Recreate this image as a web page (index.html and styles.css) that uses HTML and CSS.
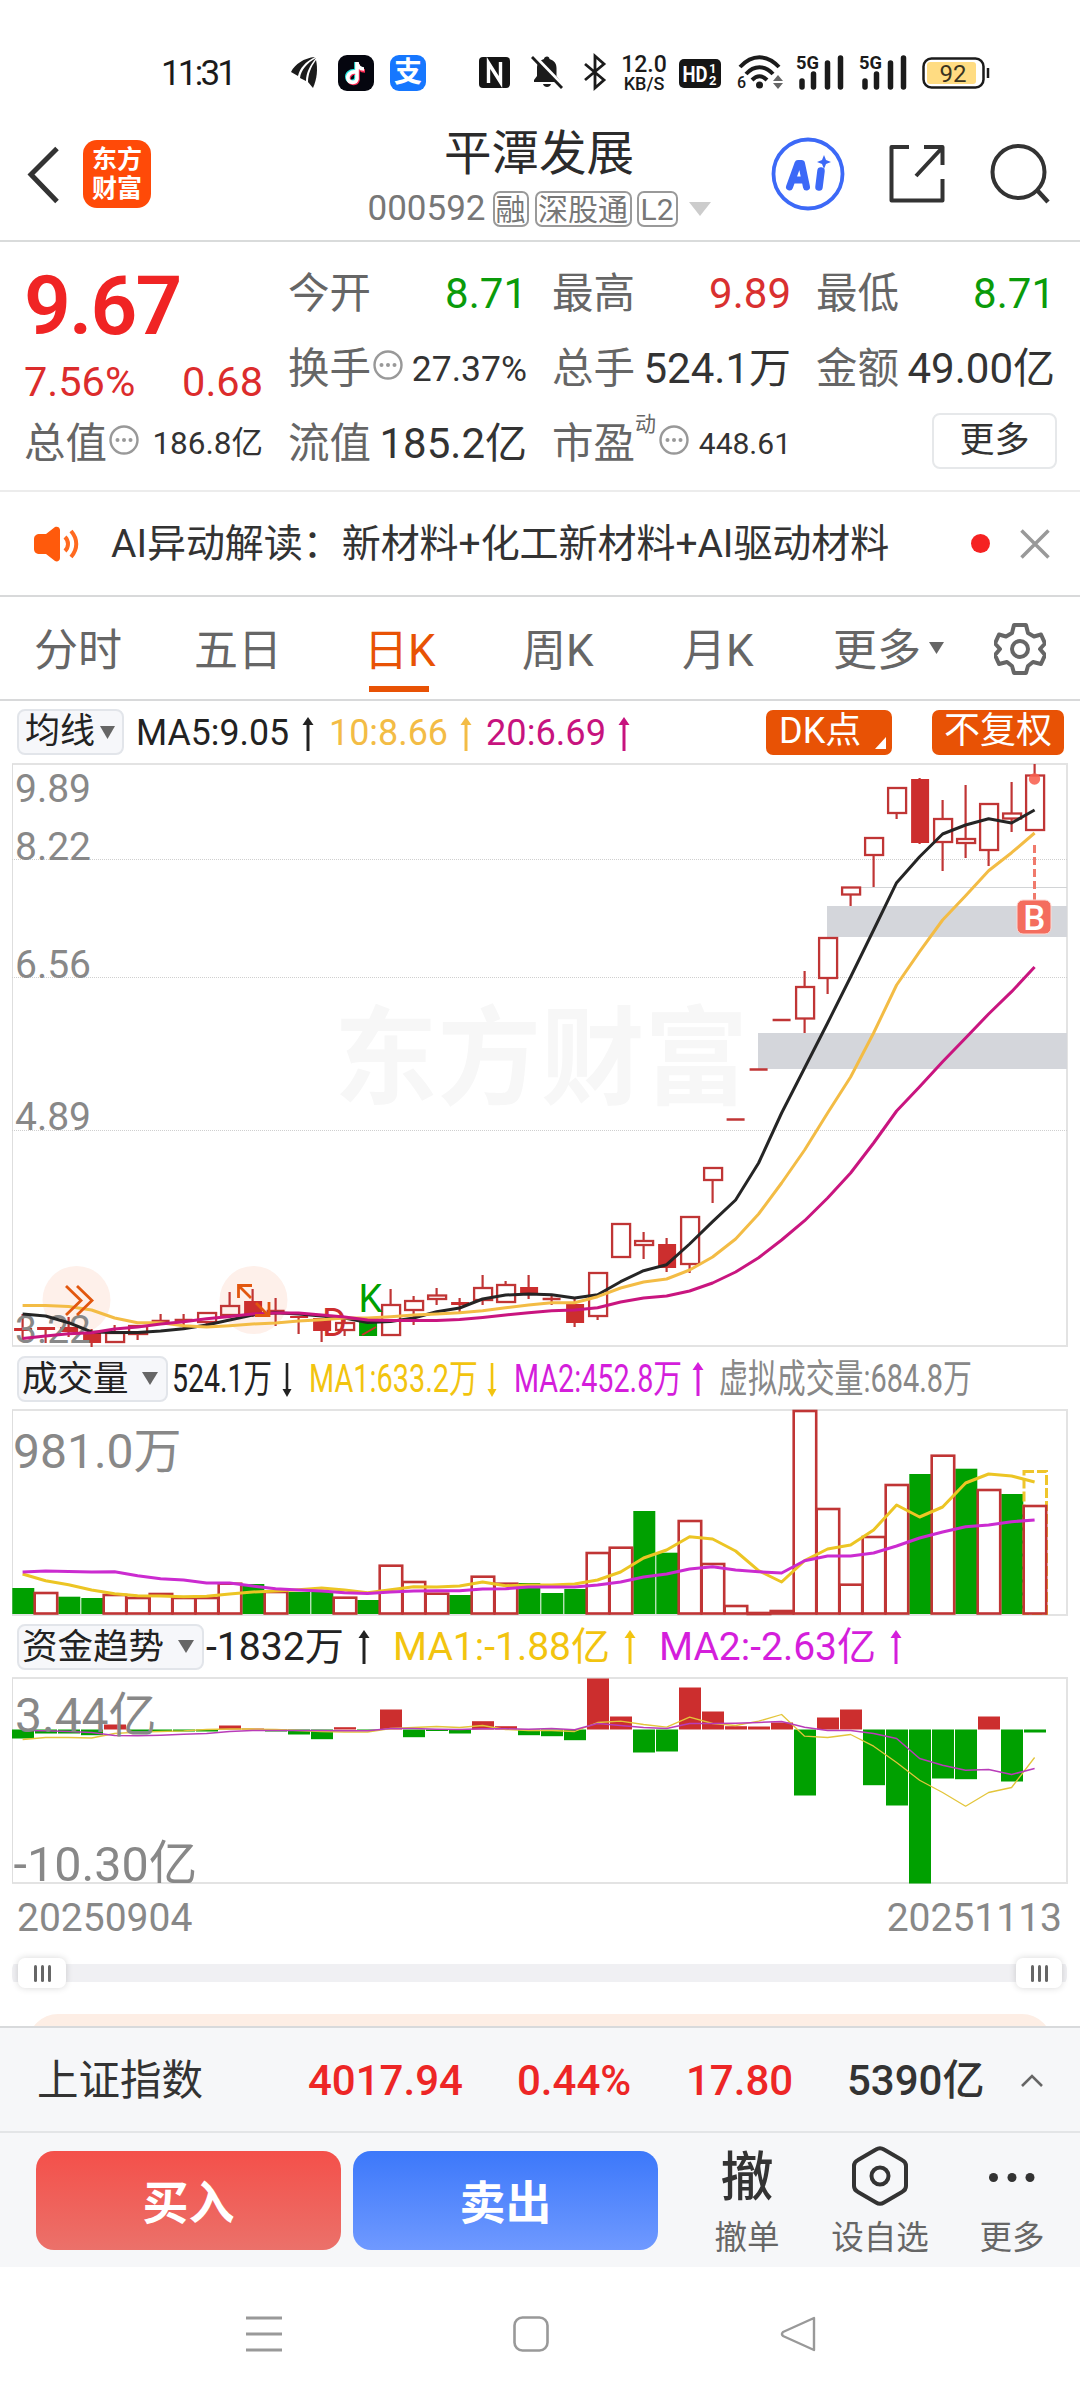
FILE: index.html
```
<!DOCTYPE html>
<html lang="zh-CN">
<head>
<meta charset="utf-8">
<title>平潭发展 000592</title>
<link rel="stylesheet" href="styles.css">
</head>
<body>
<main class="screen">
  <div class="status">
    <span class="clock">11:31</span>
    <svg class="s-bird" width="28" height="34" viewBox="0 0 28 34"><path d="M25 2C14 3 5 9 1 17l7 4C10 13 15 7 25 2z" fill="#1b1b1b"/><path d="M26 3c-9 5-15 12-16 20l6 3c0-8 4-16 10-23z" fill="#1b1b1b"/><path d="M26 5c-5 7-8 14-8 22l5 6c4-9 5-19 3-28z" fill="#1b1b1b"/></svg>
    <svg class="s-tok" width="36" height="36" viewBox="0 0 36 36"><rect width="36" height="36" rx="9" fill="#05060f"/><g fill="none" stroke-width="3.600"><path d="M17 16c-5-1-9 3-8 7s8 5 9 0V7c0 4 3 7 7 7" stroke="#29e6e2"/><path d="M19 18c-5-1-9 3-8 7s8 5 9 0V9c0 4 3 7 7 7" stroke="#fb2c55"/><path d="M18 17c-5-1-9 3-8 7s8 5 9 0V7c0 4 3 7 7 7" stroke="#fff"/></g></svg>
    <span class="s-pay">支</span>
    <svg class="s-nfc" width="31" height="31" viewBox="0 0 31 31"><rect width="31" height="31" rx="4" fill="#151515"/><path d="M9.500 26V6l12 19V5M9.500 8v18M21.500 5v18" fill="none" stroke="#fff" stroke-width="3.400"/></svg>
    <svg class="s-bell" width="34" height="34" viewBox="0 0 34 34"><path d="M17 1.500c1.500 0 2.500 1 2.500 2.500 5 1.500 7 5 7 9v8l3 4v2H4v-2l3-4v-8c0-4 2-7.500 7-9 0-1.500 1.500-2.500 3-2.500z" fill="#1b1b1b"/><path d="M13 29h8c-1 4-7 4-8 0z" fill="#1b1b1b"/><path d="M3.500 .5l30 31" stroke="#fff" stroke-width="4"/><path d="M2 2l30 31" stroke="#1b1b1b" stroke-width="2.800"/></svg>
    <svg class="s-bt" width="24" height="34" viewBox="0 0 24 34"><path d="M2 9l19 16-9 8V1l9 8L2 25" fill="none" stroke="#1b1b1b" stroke-width="2.800"/></svg>
    <span class="s-speed"><b>12.0</b><i>KB/S</i></span>
    <svg class="s-hd" width="42" height="29" viewBox="0 0 42 29"><rect width="42" height="29" rx="5" fill="#161616"/><text x="3.500" y="22.500" font-size="22" font-weight="700" fill="#fff" textLength="25" lengthAdjust="spacingAndGlyphs">HD</text><text x="30" y="13.500" font-size="13" font-weight="700" fill="#fff">1</text><text x="30" y="25.500" font-size="13" font-weight="700" fill="#fff">2</text></svg>
    <svg class="s-wifi" width="50" height="34" viewBox="0 0 50 34"><g fill="none" stroke="#1b1b1b" stroke-width="4"><path d="M3 12c12-13 27-13 39 0"/><path d="M9 19c8-9 19-9 27 0"/><path d="M15 25c5-5 10-5 15 0"/></g><circle cx="22.500" cy="30" r="3.500" fill="#1b1b1b"/><text x="0" y="33" font-size="16" font-weight="500" fill="#1b1b1b">6</text><path d="M36 26l5-6 5 6zM36 28l5 6 5-6z" fill="#666"/></svg>
    <svg class="s-sig" width="48" height="34" viewBox="0 0 48 34"><text x="0" y="13.500" font-size="18" font-weight="700" fill="#1b1b1b" textLength="23" lengthAdjust="spacingAndGlyphs">5G</text><path d="M5.500 27v6M17 20v13M31 9v24M44 4v29" stroke="#1b1b1b" stroke-width="5.500" stroke-linecap="round" transform="translate(.5 -1)"/></svg>
    <svg class="s-sig2" width="48" height="34" viewBox="0 0 48 34"><text x="0" y="13.500" font-size="18" font-weight="700" fill="#1b1b1b" textLength="23" lengthAdjust="spacingAndGlyphs">5G</text><path d="M5.500 27v6M17 20v13M31 9v24M44 4v29" stroke="#1b1b1b" stroke-width="5.500" stroke-linecap="round" transform="translate(.5 -1)"/></svg>
    <svg class="s-bat" width="68" height="32" viewBox="0 0 68 32"><rect x="1.500" y="1.500" width="60" height="29" rx="8" fill="#fff" stroke="#1b1b1b" stroke-width="2.500"/><rect x="5" y="5" width="49" height="22" rx="3" fill="#ffdc82"/><path d="M66 11v10" stroke="#1b1b1b" stroke-width="2.500"/><text x="31" y="24.500" font-size="24" fill="#3a3320" text-anchor="middle">92</text></svg>
  </div>

  <header class="header">
    <div class="head-left">
      <svg class="back" width="34" height="60" viewBox="0 0 34 60"><path d="M31 3.500L5 29.500l26 27" fill="none" stroke="#333" stroke-width="5"/></svg>
      <div class="logo"><span>东方</span><span>财富</span></div>
    </div>
    <div class="head-mid">
      <h1 class="name">平潭发展</h1>
      <div class="codes"><span class="code">000592</span><span class="tag t1">融</span><span class="tag t2">深股通</span><span class="tag t3">L2</span><svg class="codes-tri" width="22" height="14"><path d="M0 0h22L11 14z" fill="#ccc"/></svg></div>
    </div>
    <div class="head-right">
      <svg width="74" height="74" viewBox="0 0 74 74"><circle cx="37" cy="37" r="34.500" fill="none" stroke="#3c69f7" stroke-width="3.800"/><path d="M18.500 50L27 26.500h3.500L35.500 50M23 43h10" fill="none" stroke="#3c69f7" stroke-width="7" stroke-linejoin="round" stroke-linecap="round"/><path d="M50 34l-2 16" stroke="#3c69f7" stroke-width="7.500" stroke-linecap="round"/><path d="M53 18l2 5 5 2-5 2-2 5-2-5-5-2 5-2z" fill="#3c69f7"/></svg>
      <svg class="share" width="60" height="60" viewBox="0 0 60 60"><path d="M22 3H4.500v53.500h51V35M37 3h18.500v18M55 4L29 32" fill="none" stroke="#333" stroke-width="4" stroke-linejoin="round"/></svg>
      <svg class="find" width="61" height="62" viewBox="0 0 61 62"><circle cx="28.500" cy="29" r="26" fill="none" stroke="#333" stroke-width="4"/><path d="M47 47l11 12" stroke="#333" stroke-width="4.500"/></svg>
    </div>
  </header>

  <section class="quote">
    <div class="price">
      <div class="last">9.67</div>
      <div class="chg"><span>7.56%</span><span>0.68</span></div>
    </div>
    <div class="kv"><span class="k">今开</span><span class="v dn">8.71</span></div>
    <div class="kv"><span class="k">最高</span><span class="v up">9.89</span></div>
    <div class="kv"><span class="k">最低</span><span class="v dn">8.71</span></div>
    <div class="kv"><span class="k">换手</span><svg class="dots" width="30" height="30"><use href="#more-dot"/></svg><span class="v v35">27.37%</span></div>
    <div class="kv"><span class="k">总手</span><span class="v">524.1万</span></div>
    <div class="kv"><span class="k">金额</span><span class="v">49.00亿</span></div>
    <div class="kv"><span class="k">总值</span><svg class="dots" width="30" height="30"><use href="#more-dot"/></svg><span class="v v31">186.8亿</span></div>
    <div class="kv"><span class="k">流值</span><span class="v">185.2亿</span></div>
    <div class="kv"><span class="k">市盈</span><sup class="sup">动</sup><svg class="dots" width="30" height="30"><use href="#more-dot"/></svg><span class="v v30">448.61</span></div>
    <div class="kv end"><span class="more-btn">更多</span></div>
  </section>

  <section class="news">
    <svg width="46" height="38" viewBox="0 0 46 38"><path d="M7 9h6L22 2c2-1 5 0 5 3v28c0 3-3 4-5 3l-9-7H7c-4 0-6-2-6-5V14c0-3 2-5 6-5z" fill="#ff5a0c"/><path d="M32 12c4 4 4 10 0 14M38 6c7 8 7 18 0 26" fill="none" stroke="#ff6a20" stroke-width="4"/></svg>
    <span class="news-text">AI异动解读：新材料+化工新材料+AI驱动材料</span>
    <i class="news-dot"></i>
    <svg width="30" height="30" viewBox="0 0 30 30"><path d="M1.500 1.500l27 27M28.500 1.500l-27 27" stroke="#999" stroke-width="3.500"/></svg>
  </section>

  <nav class="tabs">
    <span>分时</span><span>五日</span><span class="on">日K</span><span>周K</span><span>月K</span>
    <span>更多<svg class="tab-tri" width="15" height="12"><path d="M0 0h15L7.500 12z" fill="#666"/></svg></span>
    <svg class="gear" width="52" height="54" viewBox="0 0 52 54"><path d="M20 3h12l2 8 6 3.500 7-2 4 9-5 5.500 5 6-4 9-8-2-5 4-2 7H20l-2-7-5-4-8 2-4-9 5-6-5-5.500 4-9 7 2 6-3.500z" fill="none" stroke="#666" stroke-width="4" stroke-linejoin="round"/><circle cx="26" cy="27" r="8" fill="none" stroke="#666" stroke-width="4"/></svg>
  </nav>

  <div class="legend ma">
    <span class="pick p1">均线<svg width="15" height="13"><path d="M0 0h15L7.500 13z" fill="#666"/></svg></span>
    <svg class="vals" width="500" height="60" viewBox="136 701 500 60">
      <g font-size="36">
        <text x="136" y="745" fill="#222" textLength="153" lengthAdjust="spacingAndGlyphs">MA5:9.05</text>
        <text x="329" y="745" fill="#f3bc45" textLength="119" lengthAdjust="spacingAndGlyphs">10:8.66</text>
        <text x="486" y="745" fill="#c7137e" textLength="120" lengthAdjust="spacingAndGlyphs">20:6.69</text>
      </g>
      <use href="#arr" x="308" y="717" color="#222"/><use href="#arr" x="466" y="717" color="#f3bc45"/><use href="#arr" x="624" y="717" color="#c7137e"/>
    </svg>
    <span class="chip dk">DK点<svg class="corner" width="11" height="12"><path d="M11 0v12H0z" fill="#fff"/></svg></span>
    <span class="chip fq">不复权</span>
  </div>
  <svg id="kline" class="chart" width="1080" height="585" viewBox="0 763 1080 585"></svg>

  <div class="legend">
    <span class="pick p2">成交量<svg width="16" height="13"><path d="M0 0h16L8 13z" fill="#666"/></svg></span>
    <svg class="vals" width="810" height="61" viewBox="170 1348 810 61">
      <g font-size="39">
        <text x="172" y="1392" fill="#222" textLength="100" lengthAdjust="spacingAndGlyphs">524.1万</text>
        <text x="309" y="1392" fill="#f2c40f" textLength="169" lengthAdjust="spacingAndGlyphs">MA1:633.2万</text>
        <text x="514" y="1392" fill="#d41edb" textLength="168" lengthAdjust="spacingAndGlyphs">MA2:452.8万</text>
        <text x="719" y="1392" fill="#888" textLength="253" lengthAdjust="spacingAndGlyphs">虚拟成交量:684.8万</text>
      </g>
      <use href="#arrd" x="287" y="1363" color="#222"/><use href="#arrd" x="492" y="1363" color="#f2c40f"/><use href="#arr" x="698" y="1362" color="#d41edb"/>
    </svg>
  </div>
  <svg id="volume" class="chart" width="1080" height="207" viewBox="0 1409 1080 207"></svg>

  <div class="legend">
    <span class="pick p3">资金趋势<svg width="16" height="13"><path d="M0 0h16L8 13z" fill="#666"/></svg></span>
    <svg class="vals" width="710" height="62" viewBox="205 1616 710 62">
      <g font-size="38.500">
        <text x="205" y="1660" fill="#222" textLength="138" lengthAdjust="spacingAndGlyphs">-1832万</text>
        <text x="392" y="1660" fill="#f2c40f" textLength="217" lengthAdjust="spacingAndGlyphs">MA1:-1.88亿</text>
        <text x="658" y="1660" fill="#d41edb" textLength="217" lengthAdjust="spacingAndGlyphs">MA2:-2.63亿</text>
      </g>
      <use href="#arr" x="363" y="1630" color="#222"/><use href="#arr" x="629" y="1630" color="#f2c40f"/><use href="#arr" x="895" y="1630" color="#d41edb"/>
    </svg>
  </div>
  <svg id="flow" class="chart" width="1080" height="208" viewBox="0 1678 1080 208"></svg>

  <div class="dates"><span>20250904</span><span>20251113</span></div>
  <div class="slider"><i class="knob"><b></b><b></b><b></b></i><i class="knob k2"><b></b><b></b><b></b></i></div>
  <div class="peek"><div class="peek-card"></div></div>

  <section class="index">
    <span class="ix-name">上证指数</span><b class="ix up">4017.94</b><b class="ix up">0.44%</b><b class="ix up">17.80</b><b class="ix">5390亿</b>
    <svg width="24" height="14" viewBox="0 0 24 14"><path d="M2 12L12 2l10 10" fill="none" stroke="#666" stroke-width="2.600"/></svg>
  </section>

  <section class="actions">
    <span class="btn buy">买入</span>
    <span class="btn sell">卖出</span>
    <div class="act a1"><div class="act-ic"><b>撤</b></div><span>撤单</span></div>
    <div class="act a2"><div class="act-ic"><svg width="56" height="60" viewBox="0 0 56 60"><path d="M24 3.500q4-2.500 8 0l18 10.500q4 2 4 6v20q0 4-4 6L32 56.500q-4 2.500-8 0L6 46q-4-2-4-6V20q0-4 4-6z" fill="none" stroke="#333" stroke-width="4"/><circle cx="28" cy="30" r="8.500" fill="none" stroke="#333" stroke-width="4"/></svg></div><span>设自选</span></div>
    <div class="act a3"><div class="act-ic"><svg width="48" height="12"><circle cx="5.500" cy="7.500" r="4.500" fill="#333"/><circle cx="24" cy="7.500" r="4.500" fill="#333"/><circle cx="42" cy="7.500" r="4.500" fill="#333"/></svg></div><span>更多</span></div>
  </section>

  <footer class="sysnav">
    <svg width="36" height="38" viewBox="0 0 36 38"><path d="M0 3h36M0 19h36M0 35h36" stroke="#999" stroke-width="3"/></svg>
    <svg width="36" height="38" viewBox="0 0 36 38"><rect x="1.500" y="2.500" width="33" height="33" rx="8" fill="none" stroke="#999" stroke-width="2.600"/></svg>
    <svg width="36" height="38" viewBox="0 0 36 38"><path d="M34 3v32L3 21q-2-2 0-4z" fill="none" stroke="#999" stroke-width="2.400" stroke-linejoin="round"/></svg>
  </footer>
</main>
<svg class="defs" width="0" height="0">
  <defs>
    <g id="more-dot"><circle cx="15" cy="15" r="13.500" fill="none" stroke="#999" stroke-width="2.400"/><circle cx="8.500" cy="15" r="2" fill="#999"/><circle cx="15" cy="15" r="2" fill="#999"/><circle cx="21.500" cy="15" r="2" fill="#999"/></g>
    <g id="arr"><path d="M-5.500 8L0 0l5.500 8z" fill="currentColor"/><path d="M0 4v30" stroke="currentColor" stroke-width="3"/></g>
    <g id="arrd"><path d="M-4.500 26L0 34l4.500-8z" fill="currentColor"/><path d="M0 0v30" stroke="currentColor" stroke-width="2.600"/></g>
  </defs>
</svg>
<script src="chart.js"></script>
</body>
</html>
```
FILE: styles.css
```
* { box-sizing: border-box; }
body { margin: 0; background: #fff; font-family: Roboto, "Noto Sans CJK SC", sans-serif; color: #333; }
.screen { width: 1080px; height: 2400px; overflow: hidden; display: flex; flex-direction: column; background: #fff; }
.screen > * { flex: none; }
svg { display: block; flex: none; }
svg text { font-family: Roboto, "Noto Sans CJK SC", sans-serif; }
i, b { font-style: normal; }
.defs { position: absolute; }
.up { color: #ed2626; }
.dn { color: #0a9b0a; }

/* status bar */
.status { height: 120px; padding: 55px 0 0 161px; display: flex; align-items: flex-start; white-space: nowrap; }
.status svg { overflow: visible; }
.clock { width: 73px; font-size: 35px; line-height: 38px; letter-spacing: -2.8px; color: #1b1b1b; }
.s-bird { margin-left: 56px; }
.s-tok { margin-left: 20px; }
.s-pay { margin-left: 16px; width: 36px; height: 36px; border-radius: 9px; background: #1677ff; color: #fff; font-size: 28px; font-weight: 700; line-height: 35px; text-align: center; }
.s-nfc { margin: 2px 0 0 53px; }
.s-bell { margin-left: 20px; }
.s-bt { margin-left: 19px; }
.s-speed { margin-left: 13px; width: 48px; display: flex; flex-direction: column; align-items: center; color: #1b1b1b; }
.s-speed b { font-size: 23px; font-weight: 500; line-height: 20px; }
.s-speed i { font-size: 18px; font-weight: 500; line-height: 18px; }
.s-hd { margin: 4px 0 0 11px; }
.s-wifi { margin-left: 16px; }
.s-sig { margin-left: 9px; }
.s-sig2 { margin-left: 15px; }
.s-bat { margin: 2px 0 0 15px; }

/* header */
.header { height: 122px; border-bottom: 2px solid #d9dbdb; display: grid; grid-template-columns: 312px 456px 312px; }
.head-left { display: flex; padding: 20px 0 0 26px; }
.back { margin-top: 5px; }
.logo { margin-left: 23px; width: 68px; height: 68px; border-radius: 14px; background: #ff4a08; color: #fff; display: flex; flex-direction: column; align-items: center; padding-top: 5px; font-size: 25px; font-weight: 700; line-height: 29px; }
.head-mid { display: flex; flex-direction: column; align-items: center; margin-left: -2px; }
.name { margin: 2px 0 0; font-size: 47.500px; font-weight: 400; line-height: 64px; color: #2b2b2b; }
.codes { margin-top: 5px; height: 36px; display: flex; align-items: center; color: #777; }
.code { font-size: 35px; line-height: 36px; }
.tag { height: 36px; border: 2px solid #999; border-radius: 7px; font-size: 30px; line-height: 33px; text-align: center; }
.t1 { width: 36px; margin-left: 7px; }
.t2 { width: 97px; margin-left: 6px; }
.t3 { width: 41px; margin-left: 5px; }
.codes-tri { margin-left: 11px; }
.head-right { display: flex; align-items: flex-start; padding: 17px 0 0 3px; }
.share { margin: 7px 0 0 42px; }
.find { margin: 6px 0 0 43px; }

/* quote */
.quote { height: 250px; padding: 14px 25px 0 24px; border-bottom: 2px solid #ececec; display: grid; grid-template-columns: repeat(4, 239px); grid-template-rows: repeat(3, 75px); column-gap: 25px; }
.price { grid-row: span 2; }
.last { font-size: 82px; font-weight: 600; line-height: 100px; letter-spacing: -1.8px; color: #f02424; }
.chg { display: flex; justify-content: space-between; font-size: 41.500px; line-height: 51px; color: #dc2c2c; }
.kv { display: flex; line-height: 76px; font-size: 42px; white-space: nowrap; }
.k { font-size: 41.500px; color: #666; }
.v { margin-left: auto; }
.v.up { color: #d93030; }
.v35 { font-size: 35.500px; }
.v31 { font-size: 31.500px; }
.v30 { font-size: 30px; }
.dots { margin: 19px 0 0 2px; }
.sup { font-size: 21px; line-height: 36px; color: #666; }
.sup + .dots { margin-left: 3px; }
.end { justify-content: flex-end; padding-top: 7px; margin-right: -2px; }
.more-btn { width: 125px; height: 56px; border: 2px solid #e6e8ea; border-radius: 8px; font-size: 35px; line-height: 52px; text-align: center; }

/* news */
.news { height: 105px; border-bottom: 2px solid #d8d9da; padding: 0 30px 0 33px; display: flex; align-items: center; }
.news-text { margin-left: 32px; width: 791px; font-size: 39px; line-height: 60px; letter-spacing: -.05px; white-space: nowrap; }
.news-dot { width: 19px; height: 19px; margin: 0 30px 0 69px; border-radius: 50%; background: #f52222; }

/* tabs */
.tabs { height: 104px; border-bottom: 2px solid #d8d9da; padding-left: 34px; display: grid; grid-template-columns: 160px 170px 158px 160px 151px 161px 52px; font-size: 44px; line-height: 108px; color: #666; }
.tabs span { display: flex; }
.tabs .on { color: #e85205; width: 72px; background: linear-gradient(#e85205, #e85205) no-repeat 5px 89px / 60px 6px; }
.tab-tri { margin: 45px 0 0 8px; }
.gear { margin-top: 25px; }

/* indicator legends */
.legend { height: 61px; display: flex; align-items: center; padding-left: 17px; }
.legend.ma { height: 62px; align-items: flex-start; }
.pick { height: 46px; border: 2px solid #e2e5ea; border-radius: 8px; background: #f6f7fa; font-size: 35.500px; line-height: 42px; color: #222; display: flex; align-items: center; white-space: nowrap; padding-left: 3px; }
.p1 { width: 107px; margin-top: 8px; font-size: 35px; padding-left: 6px; }
.p1 svg { margin-left: 5px; }
.p2 { width: 151px; }
.p2 svg { margin-left: 13px; }
.p3 { width: 187px; }
.p3 svg { margin-left: 14px; }
.vals { margin-left: 2px; overflow: visible; }
.ma .vals { margin-left: 12px; }
.chip { height: 45px; margin-top: 9px; border-radius: 7px; background: #e85205; color: #fff; font-size: 36px; line-height: 43px; text-align: center; position: relative; }
.dk { width: 126px; margin-left: 130px; text-align: left; padding-left: 13px; }
.corner { position: absolute; right: 6px; bottom: 6px; }
.fq { width: 132px; margin-left: 40px; }

/* axis and range slider */
.dates { height: 73px; padding: 3px 18px 0 17px; display: flex; justify-content: space-between; font-size: 39px; line-height: 60px; color: #888; }
.slider { height: 30px; margin: 0 13px 0 12px; padding: 0 5px 0 6px; display: flex; justify-content: space-between; background: linear-gradient(#f0f0f3, #f0f0f3) no-repeat 0 6px / 100% 18px; border-radius: 12px; }
.knob { width: 48px; height: 30px; background: #fff; border-radius: 7px; box-shadow: 0 0 7px rgba(0,0,0,.16); display: flex; gap: 4px; align-items: center; justify-content: center; }
.knob b { width: 3px; height: 17px; border-radius: 2px; background: #666; }
.knob.k2 { width: 46px; }
.peek { height: 38px; padding: 26px 28px 0; overflow: hidden; }
.peek-card { height: 60px; border-radius: 32px; background: #fdeee5; }

/* market index bar */
.index { height: 107px; background: #f6f7f9; border-top: 2px solid #d8dadc; border-bottom: 2px solid #e3e5e7; padding-left: 37px; display: grid; grid-template-columns: 271px 209px 169px 161px 173px 24px; align-items: center; padding-top: 3px; }
.ix-name { font-size: 41.500px; line-height: 60px; margin-top: -1px; }
.ix { font-size: 42px; font-weight: 500; line-height: 60px; }

/* trade actions */
.actions { height: 134px; background: #f6f7f9; display: flex; padding: 18px 0 0 36px; }
.btn { width: 305px; height: 99px; border-radius: 18px; color: #fff; font-size: 46px; font-weight: 700; line-height: 104px; text-align: center; }
.buy { background: linear-gradient(#f4504a, #eb716a); }
.sell { margin-left: 12px; background: linear-gradient(#3c78fa, #6f99ff); }
.act { display: flex; flex-direction: column; align-items: center; font-size: 32.500px; color: #666; line-height: 44px; white-space: nowrap; }
.act-ic { height: 64px; margin-top: -8px; display: flex; align-items: center; color: #333; }
.act-ic b { font-size: 53px; font-weight: 500; line-height: 64px; padding-top: 6px; }
.act-ic svg { margin-top: 1px; }
.act > span { margin-top: 9px; }
.a1 { width: 66px; margin-left: 56px; }
.a2 { width: 98px; margin-left: 51px; }
.a3 { width: 66px; margin-left: 50px; }

/* system navigation */
.sysnav { height: 132px; padding: 48px 264px 0 246px; display: flex; justify-content: space-between; }
```
FILE: chart.js
```
const N = 45, STEP = 23;
const RED = '#cc2e2e', LINE = '#c03535', GREEN = '#00a000';
const cx = i => 22.6 + STEP * i;
const path = (ys, color, w) =>
  `<polyline fill="none" stroke="${color}" stroke-width="${w}" stroke-linejoin="round" points="${ys.map((y, i) => `${cx(i).toFixed(1)},${y}`).join(' ')}"/>`;
const frame = (top, bottom) =>
  `<path d="M12 ${top}H1067V${bottom}H12" fill="none" stroke="#e3e3e3" stroke-width="2"/><path d="M12.500 ${top}V${bottom}" stroke="#dedede"/>`;
const label = (x, y, size, text, extra = 'fill="#888"') =>
  `<text x="${x}" y="${y}" font-size="${size}" ${extra}>${text}</text>`;

/* candles: [kind, bodyTop, bodyBottom, high, low]; h hollow, f filled, g green, l flat */
const candles = [
  ['f',1328,1331,1314,1340],['f',1327,1330,1327,1343],['f',1327,1332,1317,1337],['f',1332,1343,1329,1347],
  ['h',1333,1342,1325,1343],['h',1326,1334,1326,1340],['l',1321,1321,1314,1324],['l',1320,1320,1314,1328],
  ['h',1313,1322,1313,1326],['h',1306,1315,1292,1318],['f',1301,1314,1289,1317],['l',1311,1311,1298,1326],
  ['f',1316,1318,1316,1334],['f',1318,1331,1318,1342],['h',1323,1330,1317,1336],['g',1322,1336,1318,1336],
  ['h',1305,1335,1289,1335],['h',1301,1310,1296,1325],['h',1295.500,1299,1288,1305],['f',1302,1305,1298,1313],
  ['h',1288,1300,1275,1305],['h',1285,1302,1281,1302],['f',1287,1294,1275,1299],['l',1299,1299,1296,1305],
  ['f',1304,1323,1298,1327],['h',1273,1316,1273,1320],['h',1224,1257,1224,1257],['h',1241,1245,1232,1259],
  ['f',1244,1268,1238,1272],['h',1217,1264,1217,1273],['h',1168,1180,1168,1203],['l',1119.500,1119.500,1119.5,1119],
  ['l',1069.500,1069.500,1069.5,1069],['l',1020,1020,1020,1020],['h',987,1018.500,971,1033],['h',938,978,938,994],
  ['h',887.500,894.500,887.5,906],['h',838,855,838,887],['h',788,813,788,819],['f',779,843,778,844],
  ['h',819,842,800,871],['h',839,843,785,858],['h',804,850,804,866],['h',813.500,818.500,782,832],['h',775.500,830,764,830]
];
const ma5 = [1314,1316,1322.7,1332,1332.5,1332.5,1331,1328.7,1325,1320,1315,1312.7,1314,1316,1318,1322.5,1321.5,1318,1311.7,1308,1299,1295,1294,1294.7,1298,1294.7,1281.7,1270.7,1264.7,1244,1221.7,1200,1163,1113,1068,1023,977,930,882.7,856.7,834,825,818.7,823,810];
const ma10 = [1305.5,1305.5,1306.5,1310,1318,1322.7,1322.7,1325.7,1327,1325.7,1324,1323,1321,1319.7,1318,1318,1316.7,1315,1314,1312.7,1310.7,1307.7,1305,1302.7,1302.7,1296.7,1288,1282,1279,1270,1257,1239,1214,1183,1150,1113,1077,1033,985,951.7,920,895.7,870.7,852.7,833];
const ma20 = [1338.5,1336,1333.7,1332.7,1329,1327,1324,1321.7,1318.7,1316.5,1314,1313,1313,1315,1317,1320,1320.5,1320.5,1320.5,1319.5,1317.5,1315,1312.7,1310.7,1310,1307.7,1302,1298,1296,1291,1283,1272,1257.7,1240,1220.7,1198,1173,1143,1111,1086.7,1061.7,1038,1014,991.7,967];

let k = frame(764, 1346);
k += `<text x="334" y="1096" font-size="107" font-weight="700" fill="#f7f7f7" textLength="414" lengthAdjust="spacingAndGlyphs">东方财富</text>`;
for (const y of [859.5, 977.5, 1130.5])
  k += `<path d="M12 ${y}H1067" stroke="#cfcfcf" stroke-width="1" stroke-dasharray="1 1"/>`;
k += `<path d="M861 887.500H1067" stroke="#d2d4d6" stroke-width="1"/>`;
k += `<rect x="827" y="906" width="240" height="31" fill="#d4d6db"/><rect x="758" y="1033" width="309" height="36" fill="#d4d6db"/>`;
k += `<circle cx="76.500" cy="1300" r="34" fill="#fef0ea"/><circle cx="253.500" cy="1300" r="34" fill="#fef0ea"/>`;
k += label(15, 802, 39, '9.89') + label(15, 860, 39, '8.22') + label(15, 978, 39, '6.56') + label(15, 1130, 39, '4.89');
candles.forEach(([t, a, b, hi, lo], i) => {
  const x = cx(i), body = t === 'g' ? GREEN : RED;
  if (hi < a) k += `<path d="M${x} ${hi}V${a}" stroke="${LINE}" stroke-width="2.200"/>`;
  if (lo > b) k += `<path d="M${x} ${b}V${lo}" stroke="${LINE}" stroke-width="2.200"/>`;
  if (t === 'h') k += `<rect x="${x - 8.5}" y="${a}" width="18" height="${b - a}" fill="none" stroke="${LINE}" stroke-width="2.300"/>`;
  else if (t === 'l') k += `<path d="M${x - 9} ${a}h18" stroke="${LINE}" stroke-width="2.500"/>`;
  else k += `<rect x="${x - 8.500}" y="${a}" width="18" height="${b - a}" fill="${body}"/>`;
});
k += `<path d="M362 1335l14-8" stroke="${RED}" stroke-width="2"/>`;
k += label(15, 1343, 39, '3.22');
k += label(322, 1336, 38, 'D', `fill="${RED}"`);
k += label(358.5, 1312, 38, 'K', `fill="${GREEN}"`);
k += path(ma5, '#252525', 3) + path(ma10, '#f3bc45', 3) + path(ma20, '#c9157f', 3);
k += `<g fill="none" stroke="#e2570f" stroke-width="2.800"><path d="M66 1286l15 14.500-15 14.500M77 1286l15 14.500-15 14.500"/><path d="M238.500 1298v-12.500H252M239 1286l12 12M255 1315.500h14V1302M268 1315l-12-12"/></g>`;
k += `<path d="M1034.500 845V900" stroke="#f07a6c" stroke-width="3" stroke-dasharray="8 4"/><circle cx="1034.500" cy="779" r="5.700" fill="#f8604e" opacity=".88"/>`;
k += `<rect x="1017" y="900" width="34" height="34" rx="6" fill="#f46d5e" stroke="#fbd9d4"/>` + label(1034.2, 929.5, 35, 'B', 'fill="#fff" font-weight="500" text-anchor="middle"');
document.getElementById('kline').innerHTML = k;

/* volume: bar colour and top edge */
const volKind = 'grggrrrrrrgrggrgrrrgrrgggrrggrrrrrrrrrrgrgrgr';
const volTop = [1588,1592,1596.7,1598,1594,1597,1593,1597,1597,1582.7,1584,1591,1592,1592,1596.7,1600,1564.7,1581,1592.7,1595,1575.7,1582.7,1583,1593,1589,1552,1546.7,1511,1552.7,1520,1563,1605,1612,1610,1410,1508,1583.7,1536,1484,1474,1454.7,1468.7,1489,1494,1505];
const vma1 = [1574,1580.7,1584.7,1590,1593.7,1595.7,1596,1596.7,1596.3,1594,1592,1591,1589.7,1588,1590,1592.7,1589.7,1586.7,1587,1586,1582,1585.7,1585,1585,1584,1580,1572,1558,1550,1536.7,1539,1551,1570.7,1582,1560.7,1549,1545,1530,1505,1517,1507,1483,1474,1476,1482];
const vma2 = [1572,1571,1571.5,1572,1571.7,1575.7,1578.7,1580,1583,1583,1586,1588.7,1590,1591,1592.7,1593.5,1592,1591,1590.7,1590.7,1589,1588.7,1587,1587,1587,1585,1582,1577,1574,1569,1566.7,1570,1571.7,1573,1560.7,1556,1556,1553,1546,1538,1532,1526.7,1525,1521.7,1520];
let v = frame(1410, 1615) + label(13, 1468, 48, '981.0万');
for (let i = 0; i < N; i++) if (volKind[i] === 'g')
  v += `<rect x="${12.3 + STEP * i}" y="${volTop[i]}" width="22" height="${1614 - volTop[i]}" fill="${GREEN}"/>`;
v += `<rect x="1024" y="1471.500" width="22.500" height="142" fill="none" stroke="#efc52b" stroke-width="3" stroke-dasharray="10 3"/>`;
for (let i = 0; i < N; i++) if (volKind[i] === 'r')
  v += `<rect x="${11.7 + STEP * i}" y="${volTop[i] + 1}" width="22.500" height="${Math.max(1, 1612.500 - volTop[i])}" fill="${i === 44 ? '#fff' : 'none'}" stroke="${LINE}" stroke-width="2.600"/>`;
v += path(vma1, '#ecc524', 3) + path(vma2, '#cb2bd0', 3);
document.getElementById('volume').innerHTML = v;

/* capital flow: bar end, measured from the zero line */
const ZERO = 1730;
const flow = [1739,1734,1734,1735.7,1725,1731.5,1732,1732,1732,1726,1729,1732,1735,1739.7,1727.7,1731.5,1710,1737.7,1731.5,1734,1721.7,1726.7,1735.7,1736.7,1740.7,1679,1717,1753,1752,1688,1712,1726.7,1727,1723,1796,1718,1710,1785.7,1806,1884,1779,1779.7,1717,1782,1733];
const fma1 = [1740,1738,1738,1738.5,1734,1732.7,1732,1731.3,1730,1729.5,1729.5,1730,1731,1732,1732.5,1732.5,1729,1728,1727,1728,1726,1730,1731,1731,1732,1723,1721.7,1725,1727.7,1717.7,1724,1726,1721.7,1715,1736.7,1738,1735,1746.7,1763,1780.7,1793,1806.7,1793,1788,1758];
const fma2 = [1731,1731.3,1732,1733,1736,1736.3,1735.7,1734.7,1734,1732,1731,1731,1731,1731,1731.3,1731.3,1729,1729,1729.7,1730,1729.3,1729.3,1729.7,1729,1730.3,1724,1726,1728,1729,1724,1724,1723.7,1723,1722,1727.7,1731,1731,1734,1739,1759,1765.7,1770.7,1770,1775,1769];
let f = frame(1679, 1884);
f += `<g transform="translate(0 .5)">`;
flow.forEach((y, i) => {
  f += `<rect x="${12 + STEP * i}" y="${Math.min(y, ZERO)}" width="22" height="${Math.abs(y - ZERO)}" fill="${y < ZERO ? RED : GREEN}"/>`;
});
f += path(fma1, '#e3c53a', 1.3) + path(fma2, '#b93cb9', 1.5) + '</g>';
f += label(15, 1732.5, 48, '3.44亿') + `<svg x="0" y="1679" width="300" height="205" viewBox="0 1679 300 205">${label(13.5, 1882, 48.5, '-10.30亿')}</svg>`;
document.getElementById('flow').innerHTML = f;
```
